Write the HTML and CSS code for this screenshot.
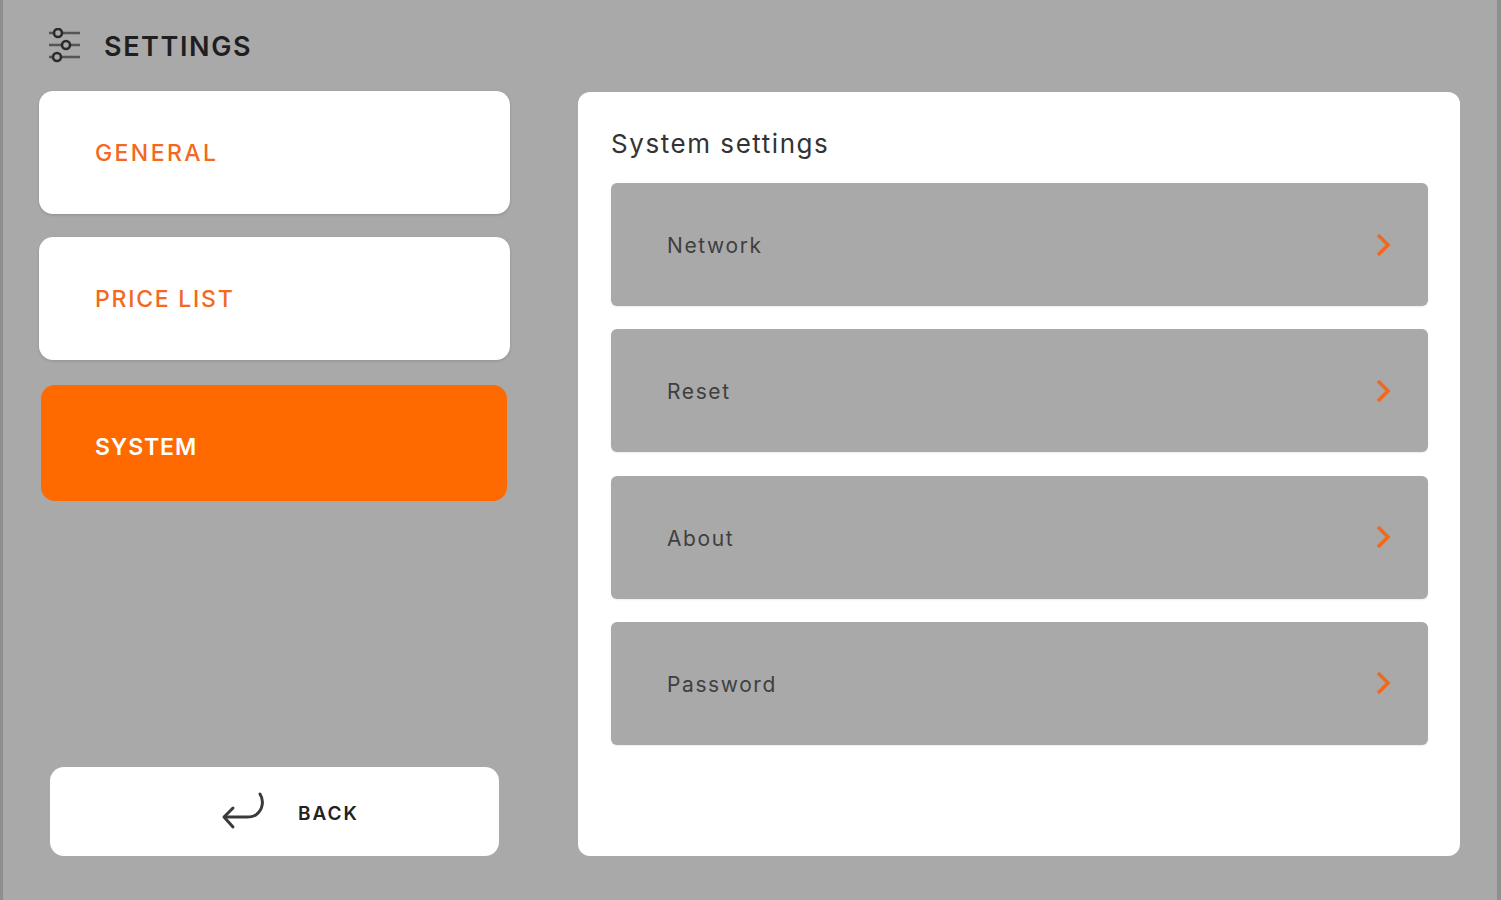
FILE: index.html
```html
<!DOCTYPE html>
<html lang="en">
<head>
  <meta charset="UTF-8" />
  <title>Settings</title>
  <link rel="stylesheet" href="styles.css">
</head>
<body>
  <div class="screen">
    <header class="top">
      <svg class="top-icon" viewBox="0 0 34 36" fill="none" stroke="#2b2b2b" stroke-width="2.6">
        <path d="M1 5h4M15 5h17M1 17h12M23 17h9M1 29h3M14 29h18" stroke="#555"/>
        <circle cx="10" cy="5" r="4"/>
        <circle cx="18" cy="17" r="4"/>
        <circle cx="9" cy="29" r="4"/>
      </svg>
      <h1>SETTINGS</h1>
    </header>

    <div class="main">
      <nav class="side">
        <a class="tab tab-general">GENERAL</a>
        <a class="tab">PRICE LIST</a>
        <a class="tab active">SYSTEM</a>
        <a class="back">
          <svg class="back-icon" viewBox="0 0 46 42" fill="none" stroke="#3a3a3a" stroke-width="3" stroke-linecap="round" stroke-linejoin="round">
            <path d="M39 3c4 6 3 15-3 20-3 3-6 3-10 3H4"/>
            <path d="M12 17l-9 9 9 10" />
          </svg>
          <span>BACK</span>
        </a>
      </nav>

      <section class="panel">
        <h2>System settings</h2>
        <div class="rows">
          <div class="row"><span>Network</span><svg class="chev" viewBox="0 0 16 24" fill="none" stroke="#f2691e" stroke-width="3.6"><path d="M3 2l10 10L3 22"/></svg></div>
          <div class="row"><span>Reset</span><svg class="chev" viewBox="0 0 16 24" fill="none" stroke="#f2691e" stroke-width="3.6"><path d="M3 2l10 10L3 22"/></svg></div>
          <div class="row"><span>About</span><svg class="chev" viewBox="0 0 16 24" fill="none" stroke="#f2691e" stroke-width="3.6"><path d="M3 2l10 10L3 22"/></svg></div>
          <div class="row"><span>Password</span><svg class="chev" viewBox="0 0 16 24" fill="none" stroke="#f2691e" stroke-width="3.6"><path d="M3 2l10 10L3 22"/></svg></div>
        </div>
      </section>
    </div>
  </div>
</body>
</html>
```

FILE: styles.css
```css
html, body {
  margin: 0;
  height: 100%;
}
body {
  font-family: Inter, "Open Sans", Arial, sans-serif;
  background: #a9a9a9;
  overflow: hidden;
}
.screen {
  box-sizing: border-box;
  height: 900px;
  width: 1501px;
  border-left: 3px solid #8f8f8f;
  border-right: 4px solid #8f8f8f;
  padding: 27px 37px 44px 36px;
  display: flex;
  flex-direction: column;
}
.top {
  display: flex;
  align-items: center;
  height: 37px;
  padding-left: 9px;
  margin-bottom: 27px;
}
.top-icon {
  width: 34px;
  height: 36px;
  margin-right: 22px;
}
h1 {
  margin: 2px 0 0;
  font-size: 27px;
  font-weight: 600;
  color: #1f1f1f;
  letter-spacing: 1.6px;
}
.main {
  flex: 1;
  display: flex;
  gap: 68px;
}
.side {
  width: 471px;
  display: flex;
  flex-direction: column;
  align-items: flex-start;
}
.tab {
  box-sizing: border-box;
  width: 100%;
  height: 123px;
  margin-bottom: 23px;
  padding-left: 56px;
  display: flex;
  align-items: center;
  background: #fff;
  border-radius: 14px;
  color: #f26a1f;
  font-size: 23px;
  font-weight: 500;
  letter-spacing: 1.75px;
  box-shadow: 0 1px 3px rgba(0, 0, 0, 0.15);
}
.tab-general {
  letter-spacing: 2.4px;
}
.tab.active {
  width: 466px;
  height: 116px;
  margin: 2px 0 0 2px;
  padding: 8px 0 0 54px;
  background: #ff6a00;
  color: #fff;
  font-weight: 600;
  letter-spacing: 0.9px;
  box-shadow: none;
}
.back {
  box-sizing: border-box;
  width: 449px;
  height: 89px;
  margin: auto 0 0 11px;
  padding-left: 171px;
  display: flex;
  align-items: center;
  background: #fff;
  border-radius: 14px;
  color: #222;
  font-size: 19px;
  font-weight: 600;
  letter-spacing: 2px;
}
.back span {
  padding-top: 3px;
}
.back-icon {
  width: 46px;
  height: 42px;
  margin-right: 31px;
}
.panel {
  box-sizing: border-box;
  width: 882px;
  margin-top: 1px;
  padding: 33px 32px 0 33px;
  background: #fff;
  border-radius: 12px;
}
h2 {
  margin: 0 0 23px;
  height: 35px;
  line-height: 37px;
  font-size: 26px;
  font-weight: 400;
  color: #333;
  letter-spacing: 1.55px;
}
.rows {
  display: flex;
  flex-direction: column;
  gap: 23.3px;
}
.row {
  box-sizing: border-box;
  height: 123px;
  padding: 0 37px 0 56px;
  display: flex;
  align-items: center;
  justify-content: space-between;
  background: #a9a9a9;
  border-radius: 6px;
  color: #3f3f3f;
  font-size: 21px;
  letter-spacing: 1.6px;
  box-shadow: 0 1px 2px rgba(0, 0, 0, 0.08);
}
.row span {
  padding-top: 2px;
}
.chev {
  width: 16px;
  height: 24px;
}
```
